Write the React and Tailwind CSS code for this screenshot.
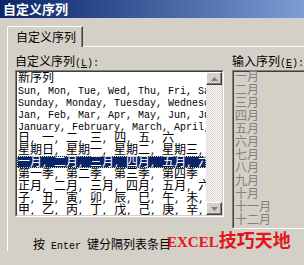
// Excel "自定义序列" dialog, Win2000 look
const CJK = /[\u2E80-\u9FFF\uFF00-\uFFEF]/;

// splits a line into CJK runs (12px) and half-width runs (10px mono = 6px/char)
function Mixed({ text }) {
  const parts = text.match(/[\u2E80-\u9FFF\uFF00-\uFFEF]+|[^\u2E80-\u9FFF\uFF00-\uFFEF]+/g) || [];
  return parts.map((p, i) =>
    CJK.test(p) ? (
      <span key={i} className="font-['Noto_Sans_CJK_SC',sans-serif] text-[12px] leading-[0]">{p}</span>
    ) : (
      <span key={i} className="font-['Liberation_Mono',monospace] text-[10px] leading-[0]">{p}</span>
    )
  );
}

const lists = [
  "新序列",
  "Sun, Mon, Tue, Wed, Thu, Fri, Sat",
  "Sunday, Monday, Tuesday, Wednesday, Thursday",
  "Jan, Feb, Mar, Apr, May, Jun, Jul, Aug, Sep",
  "January, February, March, April, May, June",
  "日, 一, 二, 三, 四, 五, 六",
  "星期日, 星期一, 星期二, 星期三, 星期四",
  "一月, 二月, 三月, 四月, 五月, 六月, 七月",
  "第一季, 第二季, 第三季, 第四季",
  "正月, 二月, 三月, 四月, 五月, 六月, 七月",
  "子, 丑, 寅, 卯, 辰, 巳, 午, 未, 申, 酉",
  "甲, 乙, 丙, 丁, 戊, 己, 庚, 辛, 壬, 癸",
];

const months = ["一月", "二月", "三月", "四月", "五月", "六月", "七月", "八月", "九月", "十月", "十一月", "十二月"];

function ScrollBtn({ down }) {
  return (
    <div className="h-[13px] flex items-center justify-center bg-[#d4d0c8] border border-t-white border-l-white border-r-[#404040] border-b-[#404040] shadow-[inset_-1px_-1px_#808080]">
      <svg width="7" height="4" viewBox="0 0 7 4">
        {down ? <path d="M0 0h7L3.5 4z" fill="#808080" /> : <path d="M0 4h7L3.5 0z" fill="#808080" />}
      </svg>
    </div>
  );
}

function Sunken({ className, children }) {
  return (
    <div className={"border border-t-[#808080] border-l-[#808080] border-r-white border-b-white " + className}>
      <div className="h-full border border-t-[#404040] border-l-[#404040] border-r-[#d4d0c8] border-b-[#d4d0c8] flex">
        {children}
      </div>
    </div>
  );
}

export default function App() {
  return (
    <div className="relative w-[304px] h-[265px] overflow-hidden bg-[#d4d0c8] text-black">
      {/* Title bar */}
      <div className="h-[18px] flex items-center pl-[3px] bg-gradient-to-r from-[#0a2468] to-[#7d9dd4] text-white font-bold text-[13px] font-['Noto_Sans_CJK_SC',sans-serif]">
        自定义序列
      </div>

      {/* Tab strip */}
      <div className="mt-[8px] ml-[7px] flex h-[21px]">
        <div className="w-[76px] flex items-center pl-[8px] border-l border-t border-white rounded-tl-[2px] border-r border-r-[#404040] shadow-[inset_-1px_0_#808080] text-[12px] font-['Noto_Sans_CJK_SC',sans-serif]">
          自定义序列
        </div>
        <div className="flex-1 border-b border-white" />
      </div>

      {/* Panel */}
      <div className="ml-[7px] border-l border-white pl-[7px] pt-[10px]">
        <div className="flex">
          <div className="w-[209px] shrink-0">
            <div className="h-[13px] pt-[1px] leading-[12px] whitespace-pre font-['Liberation_Mono',monospace] text-[10px]">
              <Mixed text="自定义序列(" />
              <span className="underline">L</span>
              <Mixed text="):" />
            </div>
            <Sunken className="h-[147px] bg-white">
              <div className="flex-1 min-w-0 overflow-hidden">
                {lists.map((s, i) => (
                  <div
                    key={i}
                    className={
                      "h-[12px] pt-[2px] leading-[12px] whitespace-pre pl-[1px] font-['Liberation_Mono',monospace] text-[10px] " +
                      (i === 7 ? "bg-[#0a246a] text-white outline outline-dotted outline-[#d8d0a0] -outline-offset-1" : "")
                    }
                  >
                    <Mixed text={s} />
                  </div>
                ))}
              </div>
              <div className="w-[16px] shrink-0 flex flex-col">
                <ScrollBtn />
                <div className="flex-1 bg-[repeating-conic-gradient(#d4d0c8_0%_25%,#ffffff_0%_50%)] bg-[length:2px_2px]" />
                <ScrollBtn down />
              </div>
            </Sunken>
          </div>

          <div className="ml-[8px] w-[100px] shrink-0">
            <div className="h-[13px] pt-[1px] leading-[12px] whitespace-pre font-['Liberation_Mono',monospace] text-[10px]">
              <Mixed text="输入序列(" />
              <span className="underline">E</span>
              <Mixed text="):" />
            </div>
            <Sunken className="h-[159px]">
              <div className="pl-[1px] text-[#808080]">
                {months.map((m) => (
                  <div key={m} className="h-[13px] pt-[1px] leading-[12px] whitespace-pre font-['Liberation_Mono',monospace] text-[10px]">
                    <Mixed text={m} />
                  </div>
                ))}
              </div>
            </Sunken>
          </div>
        </div>

        <div className="mt-[10px] pl-[18px] h-[12px] pt-[2px] leading-[12px] whitespace-pre font-['Liberation_Mono',monospace] text-[10px]">
          <Mixed text="按 Enter 键分隔列表条目" />
        </div>
      </div>

      {/* Watermark */}
      <div className="absolute left-[167px] top-[229px] whitespace-pre text-[#e3161c] font-bold leading-[20px]">
        <span className="font-['Liberation_Serif',serif] text-[15px]">EXCEL</span>
        <span className="font-['Noto_Sans_CJK_SC',sans-serif] text-[18px]">技巧天地</span>
      </div>
    </div>
  );
}
